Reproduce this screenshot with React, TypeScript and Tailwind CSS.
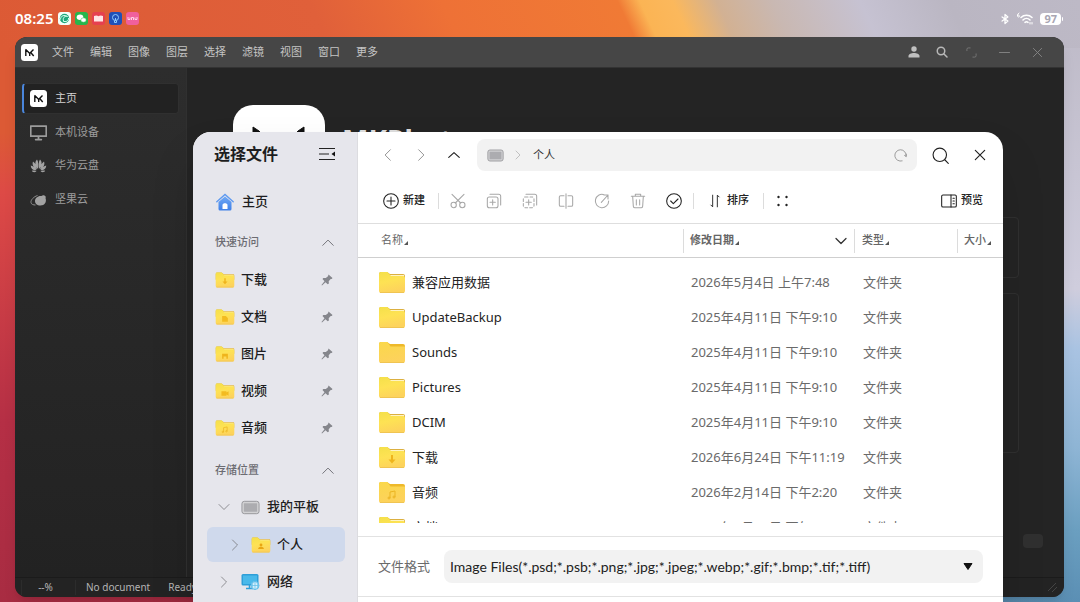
import clsx from "clsx";
import type { ReactNode } from "react";

interface IconProps {
	className?: string;
	children: ReactNode;
}

const Icon = ({ className, children }: IconProps) => (
	<svg
		viewBox="0 0 24 24"
		fill="none"
		stroke="currentColor"
		strokeWidth="1.6"
		strokeLinecap="round"
		strokeLinejoin="round"
		aria-hidden="true"
		className={clsx("shrink-0", className)}
	>
		{children}
	</svg>
);

const menuItems = ["文件", "编辑", "图像", "图层", "选择", "滤镜", "视图", "窗口", "更多"];

const quickAccess = [
	{ label: "下载", glyph: "download" },
	{ label: "文档", glyph: "document" },
	{ label: "图片", glyph: "image" },
	{ label: "视频", glyph: "video" },
	{ label: "音频", glyph: "music" },
];

const files = [
	{ name: "兼容应用数据", date: "2026年5月4日 上午7:48", glyph: "" },
	{ name: "UpdateBackup", date: "2025年4月11日 下午9:10", glyph: "" },
	{ name: "Sounds", date: "2025年4月11日 下午9:10", glyph: "", empty: true },
	{ name: "Pictures", date: "2025年4月11日 下午9:10", glyph: "" },
	{ name: "DCIM", date: "2025年4月11日 下午9:10", glyph: "" },
	{ name: "下载", date: "2026年6月24日 下午11:19", glyph: "download" },
	{ name: "音频", date: "2026年2月14日 下午2:20", glyph: "music", empty: true },
	{ name: "文档", date: "2026年2月14日 下午2:20", glyph: "document" },
];

const FolderGlyph = ({ name }: { name: string }) => {
	switch (name) {
		case "download":
			return <path d="M13 9h2v4.500h2.500L14 17.500l-3.500-4H13z" fill="#efb41c" />;
		case "document":
			return <path d="M10 10h5l3 3v5h-8z" fill="#f3bb20" />;
		case "image":
			return <path d="M10 11h8v7h-2v-3h-4v3h-2z" fill="#efb41c" />;
		case "video":
			return <path d="M9 12h7v1.500l3-1.500v6l-3-1.500v1.500H9z" fill="#f3bb20" />;
		case "music":
			return (
				<path
					d="M12 17v-6l5-1v6M12 17a1 1 0 1 1-2 0 1 1 0 0 1 2 0zM17 16a1 1 0 1 1-2 0 1 1 0 0 1 2 0z"
					fill="none"
					stroke="#ebb422"
				/>
			);
		case "user":
			return (
				<g fill="#e9a612">
					<circle cx="14" cy="11.500" r="2" />
					<path d="M10 17c0-4 8-4 8 0z" />
				</g>
			);
		default:
			return null;
	}
};

interface FolderProps {
	glyph: string;
	empty?: boolean;
	className: string;
}

const Folder = ({ glyph, empty, className }: FolderProps) => (
	<svg viewBox="0 0 28 23" aria-hidden="true" className={clsx("shrink-0", className)}>
		<path d="M1 3a2 2 0 0 1 2-2h6l3 2h13a2 2 0 0 1 2 2v6H1z" fill={empty ? "#eeb92a" : "#dcb040"} />
		{!empty && <path d="M12 4h14v5H12z" fill="#fff3c4" />}
		<path
			d={
				empty
					? "M1 3a2 2 0 0 1 2-2h6.500l3 4.500H27V20a2 2 0 0 1-2 2H3a2 2 0 0 1-2-2z"
					: "M1 3a2 2 0 0 1 2-2h6.500l3.500 4h12a2 2 0 0 1 2 2v13a2 2 0 0 1-2 2H3a2 2 0 0 1-2-2z"
			}
			fill={empty ? "url(#folder-deep)" : "url(#folder-light)"}
		/>
		<path d="M2 21.500h24" stroke="#f0c452" strokeWidth="1" />
		<FolderGlyph name={glyph} />
	</svg>
);

const Gradients = () => (
	<svg className="absolute size-0" aria-hidden="true">
		<defs>
			<linearGradient id="folder-light" x1="0" y1="0" x2="0.3" y2="1">
				<stop offset="0" stopColor="#f4e04a" />
				<stop offset="0.5" stopColor="#fee254" />
				<stop offset="1" stopColor="#fdd35c" />
			</linearGradient>
			<linearGradient id="folder-deep" x1="0" y1="0" x2="0.3" y2="1">
				<stop offset="0" stopColor="#fad84a" />
				<stop offset="1" stopColor="#fdd25c" />
			</linearGradient>
			<linearGradient id="house" x1="0" y1="0" x2="0" y2="1">
				<stop offset="0" stopColor="#6fa8f5" />
				<stop offset="1" stopColor="#3f80e8" />
			</linearGradient>
		</defs>
	</svg>
);

const MkLogo = ({ className }: { className?: string }) => (
	<svg viewBox="0 0 17 17" aria-hidden="true" className={clsx("shrink-0", className)}>
		<rect width="17" height="17" rx="3.500" fill="#fff" />
		<path
			d="M4.800 12V6M4.500 5.300l4.300 4.200M8.300 9.700l4.200-4.200M9.700 8.500l3 3.500M8.700 9.500V12"
			fill="none"
			stroke="#111"
			strokeWidth="1.400"
		/>
	</svg>
);

const Tablet = ({ className }: { className?: string }) => (
	<svg viewBox="0 0 20 15" aria-hidden="true" className={clsx("shrink-0", className)}>
		<rect x="1" y="1" width="18" height="13" rx="2.500" fill="#d2d2d4" stroke="#96969a" />
		<rect x="3" y="3" width="14" height="9" rx="0.500" fill="#acacb0" />
	</svg>
);

const Pin = () => (
	<svg viewBox="0 0 12 12" fill="#85868c" aria-hidden="true" className="size-3">
		<path d="M7.500.5l4 3.500-.8.900-1 0-2 2.300.2 2.300-1.200.8-2.200-2L1 11.500.5 11l3-3.700L1.500 5l.8-1.100 2.500.2 2.200-1.900z" />
	</svg>
);

const StatusBar = () => (
	<div className="relative flex h-[37px] items-center justify-between pr-[17px] pl-[15px] text-white">
		<div className="flex items-center gap-1">
			<span className="mr-px text-[15px] font-semibold">08:25</span>
			<svg viewBox="0 0 13 13" className="size-[13px]" aria-hidden="true">
				<rect width="13" height="13" rx="3" fill="#f4fff9" />
				<circle cx="6.500" cy="6.500" r="4.700" fill="#1fa87a" />
				<path d="M2.500 7.500c0-4 4-5 7-3-3-.5-5 1-4 4.500M10.500 6c.5 3-3 4.500-5.500 3" fill="none" stroke="#d8fff0" />
			</svg>
			<svg viewBox="0 0 13 13" className="size-[13px]" aria-hidden="true">
				<rect width="13" height="13" rx="3" fill="#27b64c" />
				<ellipse cx="5" cy="5.300" rx="3.300" ry="2.700" fill="#fff" />
				<ellipse cx="8.500" cy="8" rx="2.700" ry="2.200" fill="#fff" stroke="#27b64c" strokeWidth=".5" />
			</svg>
			<svg viewBox="0 0 13 13" className="size-[13px]" aria-hidden="true">
				<rect width="13" height="13" rx="3" fill="#e6404f" />
				<path d="M2 4c2-1 3.500-.5 4.500.3C7.500 3.500 9 3 11 4v5.500H2z" fill="#ffe4e4" />
			</svg>
			<svg viewBox="0 0 13 13" className="size-[13px]" aria-hidden="true">
				<rect width="13" height="13" rx="3" fill="#1f50b8" />
				<circle cx="6.500" cy="5.500" r="3" fill="none" stroke="#8ecbff" />
				<path d="M5.500 8.500v2h2v-2M6.500 6v2.500" fill="none" stroke="#8ecbff" />
			</svg>
			<svg viewBox="0 0 13 13" className="size-[13px]" aria-hidden="true">
				<rect width="13" height="13" rx="3" fill="#f0609c" />
				<path d="M2 5v2.500h2V5.500M5.500 8V5.500h2V8M9 5.500v2h2V5" fill="none" stroke="#ffd3e6" />
			</svg>
		</div>
		<div className="flex items-center gap-[6px]">
			<Icon className="h-3 w-[10px] stroke-[3]">
				<path d="M5 7l14 10-7 6V1l7 6L5 17" />
			</Icon>
			<svg viewBox="0 0 18 13" className="h-[13px] w-[18px]" fill="none" stroke="#fff" strokeWidth="1.600" strokeLinecap="round" aria-hidden="true">
				<path d="M5 5.500c3-3 8-3 11 0M7 8c2-2 5-2 7 0M9 10.300c1-.8 2-.8 3 0" />
				<path d="M3 1C1 2 1 5 2.500 5S4 3 2 3" strokeWidth="1" />
				<path d="M14 10.500v1.500M16 10.500v1.500" strokeWidth="1" />
			</svg>
			<span className="flex items-center gap-px">
				<span className="flex h-3 items-center rounded-[4px] bg-white px-1 text-[11px] leading-3 font-bold text-[#a9a6b3]">
					97
				</span>
				<span className="h-1 w-px rounded-r bg-white" />
			</span>
		</div>
	</div>
);

const TitleBar = () => (
	<header className="flex h-[31px] shrink-0 items-center border-b border-[#333] bg-[#464646] pl-[6px] pr-[21px]">
		<MkLogo className="size-[17px]" />
		<nav className="ml-[14px] flex gap-[16px]">
			{menuItems.map((item) => (
				<button key={item} type="button" className="w-[22px] text-[11px] whitespace-nowrap text-[#c4c4c4]">
					{item}
				</button>
			))}
		</nav>
		<div className="ml-auto flex items-center text-[#858585]">
			<button type="button" aria-label="账户" className="text-[#c0c0c0]">
				<svg viewBox="0 0 12 12" fill="currentColor" className="size-3">
					<circle cx="6" cy="3" r="2.700" />
					<path d="M.5 11.500V10c0-4 11-4 11 0v1.500z" />
				</svg>
			</button>
			<button type="button" aria-label="搜索" className="ml-4 text-[#b8b8b8]">
				<Icon className="size-3 stroke-[3]">
					<circle cx="10" cy="10" r="7.500" />
					<path d="M16 16l6 6" />
				</Icon>
			</button>
			<button type="button" aria-label="全屏" className="ml-[18px]">
				<Icon className="size-[11px]">
					<path d="M2 8V5a3 3 0 0 1 3-3h4M22 15v4a3 3 0 0 1-3 3h-4" />
				</Icon>
			</button>
			<button type="button" aria-label="最小化" className="ml-[22px]">
				<Icon className="size-[11px] stroke-2">
					<path d="M1 12h22" />
				</Icon>
			</button>
			<button type="button" aria-label="关闭" className="ml-[22px]">
				<Icon className="size-[11px] stroke-2">
					<path d="M3 3l18 18M21 3L3 21" />
				</Icon>
			</button>
		</div>
	</header>
);

const AppSidebar = () => (
	<aside className="w-[172px] shrink-0 border-r border-[#303030] bg-linear-to-b from-[#2d2d2d] to-[#222] px-[7px] pt-[15px] text-[11px] text-[#9c9c9c]">
		<a
			href="#home"
			className="flex h-[31px] items-center gap-2 rounded border border-[#303030] border-l-2 border-l-[#4a86dc] bg-[#222] pl-[6px] text-[#d4d4d4]"
		>
			<MkLogo className="size-[17px]" />
			主页
		</a>
		<a href="#local" className="mt-px flex h-[34px] items-center gap-2 pl-2">
			<Icon className="size-[17px] stroke-[2.5]">
				<path d="M1 3h22v14H1zM12 17v5M8 22h8" />
			</Icon>
			本机设备
		</a>
		<a href="#huawei" className="flex h-[33px] items-center gap-2 pl-2">
			<svg viewBox="0 0 17 17" fill="#a2a2a2" className="size-[17px]" aria-hidden="true">
				<path d="M8 12C5 9 4.500 5 7 2.500c1.500 2 1.500 6 1 9.500zM9 12c3-3 3.500-7 1-9.500-1.500 2-1.500 6-1 9.500zM7 12.500C3.500 11 1.800 7.500 3 4.500 5.500 6 6.500 9 7 12.500zM10 12.500c3.500-1.500 5.200-5 4-8-2.500 1.500-3.500 4.500-4 8zM6.500 13.300C3 13.500.8 11.500.8 8.500 3.500 9 5.500 11 6.500 13.300zM10.500 13.300c3.500.2 5.700-1.800 5.700-4.800-2.700.5-4.700 2.500-5.700 4.800zM6.500 14.200c-1.800 1.500-3.800 1.200-4.700-.5 1.700-.4 3.200-.2 4.700.5zM10.500 14.200c1.800 1.500 3.800 1.200 4.700-.5-1.700-.4-3.200-.2-4.700.5z" />
			</svg>
			华为云盘
		</a>
		<a href="#jianguoyun" className="flex h-[34px] items-center gap-2 pl-2">
			<svg viewBox="0 0 17 17" className="size-[17px]" aria-hidden="true">
				<path d="M7.500 4.500C4 5.500.5 9 1 11.500c.3 2 2.500 2.500 4.500 2.500" fill="none" stroke="#8d8d8d" />
				<path d="M5 10c0-3 3-5.500 6.500-5 1-1 2-1 3-.5 1.500 1 1.500 1.500 1 2.500 1.500 4-1 7.500-5 7.500-3.500 0-5.500-2-5.500-4.500z" fill="#a2a2a2" />
			</svg>
			坚果云
		</a>
	</aside>
);

const AppWindow = () => (
	<section className="absolute top-[37px] right-4 bottom-[5px] left-[15px] flex flex-col overflow-hidden rounded-xl bg-[#242424] shadow-lg">
		<TitleBar />
		<div className="flex min-h-0 flex-1">
			<AppSidebar />
			<main className="flex min-w-0 flex-1 flex-col pt-[37px] pr-[45px] pl-[46px]">
				<div className="flex h-[92px] shrink-0 gap-[17px]">
					<svg viewBox="0 0 92 92" className="size-[92px] shrink-0" aria-hidden="true">
						<rect width="92" height="92" rx="20" fill="#fff" />
						<path d="M24 70V34M20 22l6 4 20 23-3 3-23-25zM71 22l-6 4-21 23 3 3 24-25zM52 46l20 24" fill="#111" stroke="#111" strokeWidth="1" />
					</svg>
					<h1 className="pt-[21px] text-[28px] leading-none font-bold text-[#dedede]">MKPhotos</h1>
				</div>
				<div className="mt-5 h-[61px] shrink-0 rounded border border-[#303030]" />
				<div className="mt-[15px] h-[160px] shrink-0 rounded border border-[#303030]" />
				<div className="mt-[81px] -mr-[24px] flex justify-end">
					<span className="h-[14px] w-5 rounded-sm bg-[#303030]" />
				</div>
			</main>
		</div>
		<footer className="flex h-5 shrink-0 items-center border-t border-[#1b1b1b] bg-[#232323] text-[10px] text-[#b5b5b5]">
			<span className="ml-[6px] w-[55px] border-r border-l border-[#2c2c2c] pr-[6px] text-center">--%</span>
			<span className="ml-[10px]">No document</span>
			<span className="ml-[18px]">Ready</span>
			<svg viewBox="0 0 12 12" className="mr-[5px] ml-auto size-3" stroke="#444" aria-hidden="true">
				<path d="M1 9l8-8M5 10l5-5" />
			</svg>
		</footer>
	</section>
);

const SectionTitle = ({ children }: { children: ReactNode }) => (
	<button type="button" className="flex w-full items-center justify-between pr-[22px] pl-2 text-[11px] text-[#6c6c72]">
		{children}
		<Icon className="size-[14px]">
			<path d="M3 16l9-9 9 9" />
		</Icon>
	</button>
);

const DialogSidebar = () => (
	<aside className="flex w-[165px] shrink-0 flex-col border-r border-[#dcdce0] bg-[#e6e6ec] pl-[14px] text-[13px] font-medium text-[#1d1d20]">
		<div className="flex h-11 items-center justify-between pr-[21px] pl-[7px]">
			<h2 className="text-base font-bold">选择文件</h2>
			<button type="button" aria-label="收起侧栏">
				<svg viewBox="0 0 18 14" className="h-[14px] w-[18px]" stroke="#222" strokeWidth="1.200" aria-hidden="true">
					<path d="M1 1.500h16M1 7h10M1 12.500h16" />
					<path d="M17 4.500v5L13.500 7z" fill="#111" stroke="none" />
				</svg>
			</button>
		</div>
		<a href="#start" className="mt-[7px] flex h-[37px] shrink-0 items-center gap-2 pl-[9px]">
			<svg viewBox="0 0 18 18" className="size-[18px]" aria-hidden="true">
				<path d="M2.500 9L9 3.500 15.500 9v7a1.500 1.500 0 0 1-1.500 1.500H4A1.500 1.500 0 0 1 2.500 16z" fill="url(#house)" />
				<path d="M.8 8.800L9 1.500l8.200 7.300" fill="none" stroke="#5f9af0" strokeWidth="1.400" strokeLinecap="round" />
				<path d="M6.500 16v-4c0-2.500 5-2.500 5 0v4z" fill="#fff" />
			</svg>
			主页
		</a>
		<div className="flex h-[41px] shrink-0 items-center pt-1">
			<SectionTitle>快速访问</SectionTitle>
		</div>
		{quickAccess.map(({ label, glyph }) => (
			<a key={label} href={`#${glyph}`} className="flex h-[37px] shrink-0 items-center gap-[6px] pr-6 pl-2">
				<Folder glyph={glyph} className="h-[18px] w-5" />
				{label}
				<span className="ml-auto">
					<Pin />
				</span>
			</a>
		))}
		<div className="mt-1 flex h-[41px] shrink-0 items-center">
			<SectionTitle>存储位置</SectionTitle>
		</div>
		<a href="#tablet" className="flex h-8 shrink-0 items-center gap-[7px] pl-[11px]">
			<Icon className="mr-1 size-3 text-[#77777c]">
				<path d="M2 7l10 10L22 7" />
			</Icon>
			<Tablet className="h-[15px] w-[19px]" />
			我的平板
		</a>
		<a
			href="#personal"
			className="mt-1 mr-3 flex h-[35px] shrink-0 items-center gap-[6px] rounded-md bg-[#cfd9ec] pl-[22px]"
		>
			<Icon className="mr-1 size-3 text-[#77777c]">
				<path d="M7 2l10 10L7 22" />
			</Icon>
			<Folder glyph="user" className="h-[18px] w-5" />
			个人
		</a>
		<a href="#network" className="mt-[2px] flex h-[35px] shrink-0 items-center gap-[7px] pl-[11px]">
			<Icon className="mr-1 size-3 text-[#77777c]">
				<path d="M7 2l10 10L7 22" />
			</Icon>
			<svg viewBox="0 0 19 17" className="h-[17px] w-[19px] shrink-0" aria-hidden="true">
				<rect x=".5" y="1" width="17" height="11.500" rx="1.500" fill="#2f9fd8" />
				<rect x="2" y="2.500" width="14" height="8.500" fill="#49b9ea" />
				<path d="M5 15.500h7M8.500 12v3" stroke="#2f9fd8" strokeWidth="1.500" />
				<circle cx="14" cy="12.500" r="4" fill="#d5f0fc" stroke="#5bbce8" />
				<path d="M10 12.500h8M14 8.500v8M12 9.500c-1 2-1 4 0 6M16 9.500c1 2 1 4 0 6" fill="none" stroke="#5bbce8" strokeWidth=".7" />
			</svg>
			网络
		</a>
	</aside>
);

const Divider = () => <span className="h-4 w-px bg-[#dcdcdc]" />;

const Toolbar = () => (
	<>
		<div className="flex h-[46px] shrink-0 items-center pr-4 pl-[23px]">
			<button type="button" aria-label="后退" className="text-[#8c8c8c]">
				<Icon className="size-[14px]">
					<path d="M16 3L7 12l9 9" />
				</Icon>
			</button>
			<button type="button" aria-label="前进" className="ml-[19px] text-[#8c8c8c]">
				<Icon className="size-[14px]">
					<path d="M8 3l9 9-9 9" />
				</Icon>
			</button>
			<button type="button" aria-label="上一级" className="ml-[19px] text-[#222]">
				<Icon className="size-[14px] stroke-2">
					<path d="M3 16l9-8 9 8" />
				</Icon>
			</button>
			<div className="ml-4 flex h-8 flex-1 items-center rounded-lg bg-[#f2f2f2] pr-[10px] pl-[10px]">
				<Tablet className="h-[13px] w-[17px]" />
				<Icon className="mr-[9px] ml-2 size-3 text-[#b4b4b4]">
					<path d="M8 4l8 8-8 8" />
				</Icon>
				<span className="text-[11px] text-[#333]">个人</span>
				<button type="button" aria-label="刷新" className="ml-auto text-[#8f8f8f]">
					<Icon className="size-[13px]">
						<path d="M15 22A10.500 10.500 0 1 1 22.500 13M22.500 9.500V14l-3-2" />
					</Icon>
				</button>
			</div>
			<button type="button" aria-label="搜索" className="ml-[15px] text-[#222]">
				<Icon className="size-[17px]">
					<circle cx="11" cy="11" r="9.500" />
					<path d="M18 18l5 5" />
				</Icon>
			</button>
			<button type="button" aria-label="关闭" className="ml-[24px] text-[#222]">
				<Icon className="size-[14px] stroke-2">
					<path d="M4 4l16 16M20 4L4 20" />
				</Icon>
			</button>
		</div>
		<div className="flex h-[46px] shrink-0 items-center border-b border-[#dedede] pr-5 pl-[25px] text-[11px] font-medium text-[#222]">
			<button type="button" className="mr-[13px] flex items-center gap-1">
				<Icon className="size-4">
					<circle cx="12" cy="12" r="11" />
					<path d="M12 6v12M6 12h12" />
				</Icon>
				新建
			</button>
			<Divider />
			<div className="ml-[11px] flex items-center gap-5 text-[#a8a8a8]">
				<button type="button" aria-label="剪切">
					<Icon className="size-4">
						<circle cx="5.500" cy="18" r="4" />
						<circle cx="18.500" cy="18" r="4" />
						<path d="M3 2l13 13M21 2L8 15" />
					</Icon>
				</button>
				<button type="button" aria-label="复制">
					<Icon className="size-4">
						<rect x="2" y="6" width="16" height="16" rx="3" />
						<path d="M6 2h13a3 3 0 0 1 3 3v13M10 10v8M6 14h8" />
					</Icon>
				</button>
				<button type="button" aria-label="移动">
					<Icon className="size-4">
						<rect x="2" y="6" width="16" height="16" rx="3" strokeDasharray="4 3" />
						<path d="M6 2h13a3 3 0 0 1 3 3v13M10 10v8M6 14h8" />
					</Icon>
				</button>
				<button type="button" aria-label="重命名">
					<Icon className="size-4">
						<path d="M12 1v22M9 4H4a2 2 0 0 0-2 2v12a2 2 0 0 0 2 2h5M15 4h5a2 2 0 0 1 2 2v12a2 2 0 0 1-2 2h-5" />
					</Icon>
				</button>
				<button type="button" aria-label="分享">
					<Icon className="size-4">
						<path d="M15 2.500A10 10 0 1 0 22 12M11 14L21 3M15 3h6v6" />
					</Icon>
				</button>
				<button type="button" aria-label="删除">
					<Icon className="size-4">
						<path d="M2 5h20M8 5V2h8v3M4 5l1 15a2 2 0 0 0 2 2h10a2 2 0 0 0 2-2l1-15M9.500 10v8M14.500 10v8" />
					</Icon>
				</button>
				<button type="button" aria-label="全选" className="text-[#222]">
					<Icon className="size-4">
						<circle cx="12" cy="12" r="11" />
						<path d="M7 12l4 4 7-7" />
					</Icon>
				</button>
			</div>
			<span className="mr-[14px] ml-[11px] h-4 w-px bg-[#dcdcdc]" />
			<button type="button" className="mr-[14px] flex items-center gap-[5px]">
				<Icon className="size-[14px]">
					<path d="M8 2v20l-3-3M16 22V2l3 3" />
				</Icon>
				排序
			</button>
			<Divider />
			<button type="button" aria-label="视图" className="ml-[13px]">
				<svg viewBox="0 0 12 12" fill="#222" className="size-3">
					<circle cx="1.500" cy="2" r="1.200" />
					<circle cx="9.500" cy="2" r="1.200" />
					<circle cx="1.500" cy="10" r="1.200" />
					<circle cx="9.500" cy="10" r="1.200" />
				</svg>
			</button>
			<button type="button" className="ml-auto flex items-center gap-1">
				<Icon className="size-4">
					<rect x="1" y="3" width="22" height="18" rx="2" />
					<path d="M15 3v18M18 8h2M18 12h2M18 16h2" />
				</Icon>
				预览
			</button>
		</div>
	</>
);

const Corner = () => (
	<svg viewBox="0 0 4 4" className="mt-1 size-1 shrink-0" aria-hidden="true">
		<path d="M4 0v4H0z" fill="#555" />
	</svg>
);

const FileTable = () => (
	<div className="mb-[13px] min-h-0 flex-1 overflow-hidden">
		<table className="w-full table-fixed border-separate border-spacing-0 text-left whitespace-nowrap">
			<colgroup>
				<col />
				<col className="w-[171px]" />
				<col className="w-[103px]" />
				<col className="w-[46px]" />
			</colgroup>
			<thead className="text-[11px] text-[#666]">
				<tr className="h-[34px]">
					<th className="border-b border-[#cfcfcf] p-0 pl-[23px] font-normal">
						<div className="flex items-center gap-px">
							名称
							<Corner />
						</div>
					</th>
					<th className="border-b border-[#cfcfcf] p-0 font-bold">
						<div className="flex h-6 items-center gap-px border-l border-[#dcdcdc] pr-[7px] pl-[6px]">
							修改日期
							<Corner />
							<Icon className="ml-auto size-3 stroke-[2.5] text-[#333]">
								<path d="M2 7l10 10L22 7" />
							</Icon>
						</div>
					</th>
					<th className="border-b border-[#cfcfcf] p-0 font-medium">
						<div className="flex h-6 items-center gap-px border-l border-[#dcdcdc] pl-[7px]">
							类型
							<Corner />
						</div>
					</th>
					<th className="border-b border-[#cfcfcf] p-0 font-medium">
						<div className="flex h-6 items-center gap-px border-l border-[#dcdcdc] pl-[6px]">
							大小
							<Corner />
						</div>
					</th>
				</tr>
			</thead>
			<tbody className="text-[13px] text-[#6a6a6a] before:block before:h-[7px] before:content-['']">
				{files.map(({ name, date, glyph, empty }) => (
					<tr key={name} className="h-[35px]">
						<td className="p-0 pl-5 text-[#242424]">
							<div className="flex items-center gap-[6px]">
								<Folder glyph={glyph} empty={empty} className="h-[23px] w-7" />
								{name}
							</div>
						</td>
						<td className="p-0 pl-2">{date}</td>
						<td className="p-0 pl-[9px]">文件夹</td>
						<td className="p-0" />
					</tr>
				))}
			</tbody>
		</table>
	</div>
);

const FileDialog = () => (
	<section
		role="dialog"
		aria-label="选择文件"
		className="absolute top-[132px] right-[77px] -bottom-10 left-[193px] flex overflow-hidden rounded-t-[18px] bg-white shadow-2xl"
	>
		<DialogSidebar />
		<div className="flex min-w-0 flex-1 flex-col">
			<Toolbar />
			<FileTable />
			<div className="flex h-[60px] shrink-0 items-center border-t border-[#e2e2e2] pr-5 pl-5">
				<label htmlFor="format" className="text-[13px] text-[#6a6a6a]">
					文件格式
				</label>
				<div className="relative ml-[14px] flex-1">
					<select
						id="format"
						className="h-[33px] w-full appearance-none rounded-lg bg-[#f2f2f2] pr-8 pl-[6px] font-['Lato','Noto_Sans_CJK_SC',sans-serif] text-[14px] text-[#222]"
					>
						<option>Image Files(*.psd;*.psb;*.png;*.jpg;*.jpeg;*.webp;*.gif;*.bmp;*.tif;*.tiff)</option>
					</select>
					<svg viewBox="0 0 10 7" className="pointer-events-none absolute top-[13px] right-[10px] h-[7px] w-[10px]" aria-hidden="true">
						<path d="M1 .5h8L5 6.500z" fill="#111" stroke="#111" strokeLinejoin="round" />
					</svg>
				</div>
			</div>
			<div className="h-[46px] shrink-0 border-t border-[#e2e2e2]" />
		</div>
	</section>
);

const App = () => (
	<div className="relative h-screen overflow-hidden bg-[linear-gradient(180deg,#dc5a35_0%,#dc5a35_22%,#dd4a46_32%,#b52f45_70%,#a82c42_100%)] font-['Noto_Sans','Noto_Sans_CJK_SC',sans-serif]">
		<div className="absolute inset-y-0 right-0 w-1/2 bg-[linear-gradient(180deg,#bdb9c6_0%,#cfcddd_48%,#a9c3e2_58%,#8db4d4_75%,#6b9fc0_88%,#5b8fb4_100%)]" />
		<div className="absolute inset-x-0 top-0 h-12 bg-[linear-gradient(65deg,#dc5a35_0%,#e0603a_30%,#ee7136_42%,#f07a35_58%,#fbb454_60%,#fbb85c_63%,#d2b193_67%,#c9b8b2_72%,#c6c2d2_80%,#bab6c2_88%,#bdb9c6_100%)]" />
		<Gradients />
		<StatusBar />
		<AppWindow />
		<FileDialog />
	</div>
);

export default App;
